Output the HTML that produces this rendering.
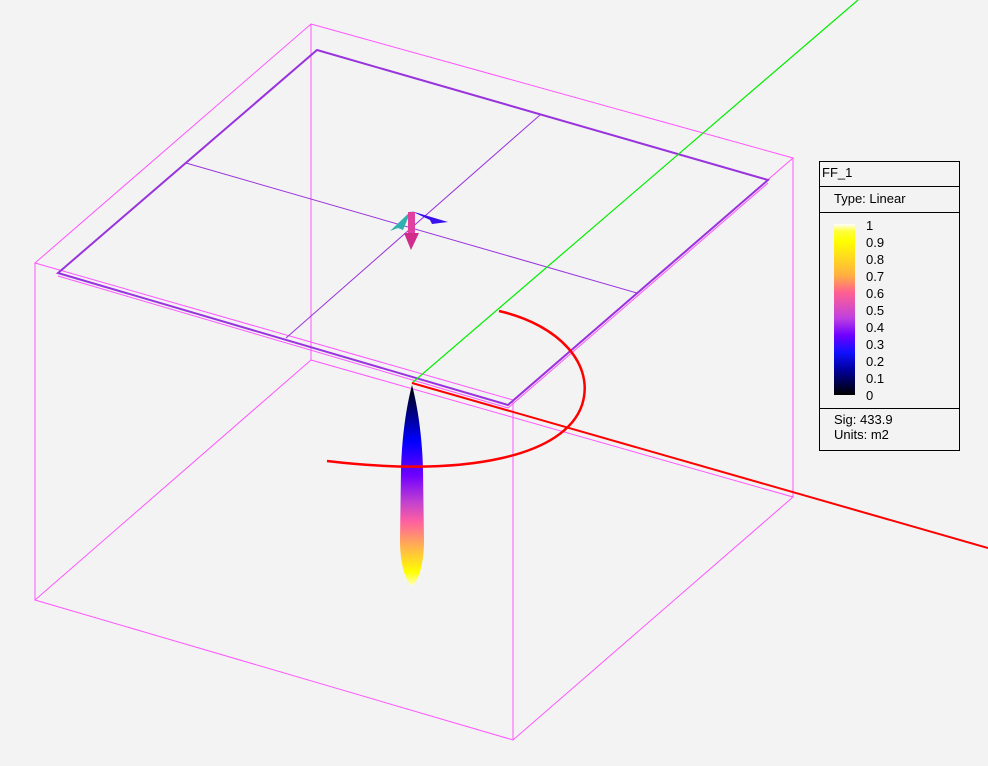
<!DOCTYPE html>
<html><head><meta charset="utf-8"><style>
html,body{margin:0;padding:0;background:#f3f3f3;}
body{width:988px;height:766px;position:relative;overflow:hidden;font-family:"Liberation Sans",sans-serif;}
svg{position:absolute;left:0;top:0;}
.leg{position:absolute;left:819px;top:161px;width:139px;height:288px;border:1px solid #000;background:#f3f3f3;font-size:13px;color:#000;}
.leg .r1{height:24px;border-bottom:1px solid #000;padding-left:2px;line-height:22px;}
.leg .r2{height:25px;border-bottom:1px solid #000;padding-left:14px;line-height:24px;}
.leg .r3{height:195px;border-bottom:1px solid #000;position:relative;}
.bar{position:absolute;left:14px;top:11px;width:21px;height:171px;background:linear-gradient(to bottom,#ffffff 0%,#ffff40 4%,#ffff00 10%,#ffb040 30%,#ff6090 40%,#c040e0 55%,#7000ff 65%,#1010ff 75%,#0000a0 85%,#000000 100%);}
.lbl{position:absolute;left:46px;font-size:13px;line-height:13px;}
.leg .r4{padding-left:14px;padding-top:3px;line-height:15px;}
</style></head><body>
<svg width="988" height="766" viewBox="0 0 988 766">
<defs>
<linearGradient id="lg" gradientUnits="userSpaceOnUse" x1="0" y1="385" x2="0" y2="586">
<stop offset="0" stop-color="#000"/>
<stop offset="0.12" stop-color="#000070"/>
<stop offset="0.28" stop-color="#0000ff"/>
<stop offset="0.45" stop-color="#7000ff"/>
<stop offset="0.58" stop-color="#c040d0"/>
<stop offset="0.68" stop-color="#ff60a0"/>
<stop offset="0.8" stop-color="#ffb050"/>
<stop offset="0.93" stop-color="#ffff00"/>
<stop offset="1" stop-color="#ffffc0"/>
</linearGradient>
</defs>
<g stroke="#ff55ff" stroke-width="1" fill="none">
<polygon points="311,24 793,158 513,400 35,263"/>
<polygon points="311,360 793,497 513,740 35,600"/>
<line x1="35" y1="263" x2="35" y2="600"/>
<line x1="311" y1="24" x2="311" y2="360"/>
<line x1="793" y1="158" x2="793" y2="497"/>
<line x1="513" y1="400" x2="513" y2="740"/>
<polyline points="58,276 508,408 768,183"/>
</g>
<g stroke="#9933dd" fill="none">
<polygon points="317,50 768,180 508,405 58,273" stroke-width="2"/>
<line x1="186" y1="163" x2="637" y2="293" stroke-width="1"/>
<line x1="540" y1="115" x2="286" y2="338" stroke-width="1"/>
</g>
<line x1="412" y1="383" x2="858" y2="0" stroke="#00ee00" stroke-width="1.2"/>
<line x1="412" y1="383" x2="988" y2="548" stroke="#ff0000" stroke-width="2"/>
<path d="M412,385 C416,400 422,430 423,470 L424,540 C424,565 418,582 412,586 C406,582 400,565 400,540 L401,470 C402,430 408,400 412,385 Z" fill="url(#lg)"/>
<path d="M499,311 C560,325 595,365 582,405 C565,455 470,478 327,461" stroke="#ff0000" stroke-width="2.5" fill="none"/>
<g>
<polygon points="411,211 448,222 432,224 430,220" fill="#3a10ee"/>
<polygon points="411,211 390,231 398,228 403,230" fill="#30b0b0"/>
<rect x="408" y="212" width="7" height="22" fill="#e040a0"/>
<polygon points="404,233 419,233 411,250" fill="#d02c8c"/>
</g>
</svg>
<div class="leg">
<div class="r1">FF_1</div>
<div class="r2">Type: Linear</div>
<div class="r3">
<div class="bar"></div>
<div class="lbl" style="top:6px">1</div>
<div class="lbl" style="top:23px">0.9</div>
<div class="lbl" style="top:40px">0.8</div>
<div class="lbl" style="top:57px">0.7</div>
<div class="lbl" style="top:74px">0.6</div>
<div class="lbl" style="top:91px">0.5</div>
<div class="lbl" style="top:108px">0.4</div>
<div class="lbl" style="top:125px">0.3</div>
<div class="lbl" style="top:142px">0.2</div>
<div class="lbl" style="top:159px">0.1</div>
<div class="lbl" style="top:176px">0</div>
</div>
<div class="r4">Sig: 433.9<br>Units: m2</div>
</div>
</body></html>
